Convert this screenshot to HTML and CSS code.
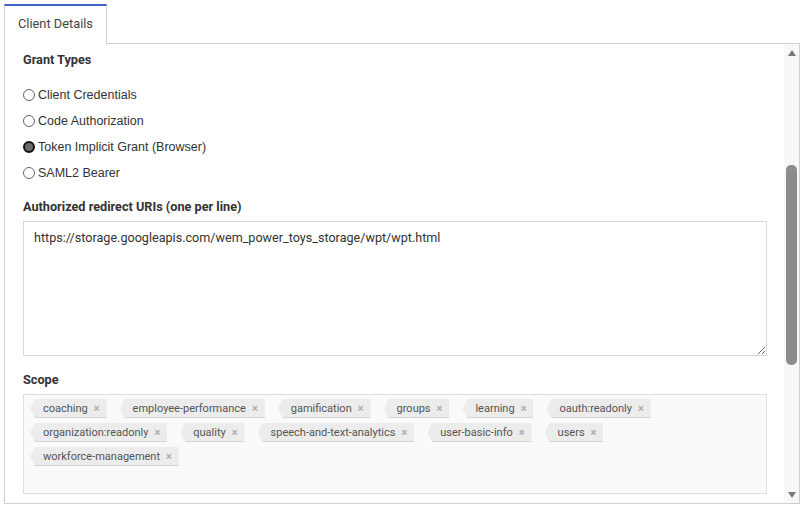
FILE: index.html
```html
<!DOCTYPE html>
<html>
<head>
<meta charset="utf-8">
<link rel="stylesheet" href="styles.css">
</head>
<body>
<div class="wrap">
  <div class="tabs">
    <div class="tab">Client Details</div>
  </div>
  <div class="panel">
    <div class="content">
      <div class="label first">Grant Types</div>
      <div class="radios">
        <label class="radio"><span class="dot"></span>Client Credentials</label>
        <label class="radio"><span class="dot"></span>Code Authorization</label>
        <label class="radio"><span class="dot checked"></span>Token Implicit Grant (Browser)</label>
        <label class="radio"><span class="dot"></span>SAML2 Bearer</label>
      </div>
      <div class="label uris">Authorized redirect URIs (one per line)</div>
      <textarea class="uri-box" readonly>https://storage.googleapis.com/wem_power_toys_storage/wpt/wpt.html</textarea>
      <div class="label scope">Scope</div>
      <div class="tag-box">
        <span class="tag">coaching<span class="x">×</span></span>
        <span class="tag">employee-performance<span class="x">×</span></span>
        <span class="tag">gamification<span class="x">×</span></span>
        <span class="tag">groups<span class="x">×</span></span>
        <span class="tag">learning<span class="x">×</span></span>
        <span class="tag">oauth:readonly<span class="x">×</span></span>
        <span class="tag">organization:readonly<span class="x">×</span></span>
        <span class="tag">quality<span class="x">×</span></span>
        <span class="tag">speech-and-text-analytics<span class="x">×</span></span>
        <span class="tag">user-basic-info<span class="x">×</span></span>
        <span class="tag">users<span class="x">×</span></span>
        <span class="tag">workforce-management<span class="x">×</span></span>
      </div>
    </div>
    <div class="scrollbar">
      <div class="arrow"><span class="tri up"></span></div>
      <div class="track"><div class="thumb"></div></div>
      <div class="arrow"><span class="tri down"></span></div>
    </div>
  </div>
</div>
</body>
</html>
```

FILE: styles.css
```css
html, body {
  margin: 0;
  padding: 0;
  background: #ffffff;
}
body {
  font-family: Roboto, "Liberation Sans", Arial, sans-serif;
  font-size: 13px;
  color: #333;
}
.wrap {
  margin: 4px 0 0 4px;
  width: 796px;
}
.tabs {
  display: flex;
}
.tab {
  position: relative;
  z-index: 1;
  width: 101px;
  height: 34px;
  padding-bottom: 4px;
  margin-bottom: -1px;
  border-top: 2px solid #3a68c0;
  border-left: 1px solid #cfcfcf;
  border-right: 1px solid #cfcfcf;
  background: #fff;
  color: #444;
  font-size: 12.8px;
  display: flex;
  align-items: center;
  justify-content: center;
  box-sizing: content-box;
}
.panel {
  display: flex;
  height: 459px;
  border: 1px solid #cfcfcf;
}
.content {
  flex: 1;
  padding: 8px 17px 0 18px;
  min-width: 0;
}
.label {
  font-weight: bold;
  font-size: 12.7px;
  line-height: 16px;
  color: #333;
}
.radios {
  margin-top: 14px;
  display: flex;
  flex-direction: column;
}
.radio {
  display: flex;
  align-items: center;
  height: 26px;
  color: #333;
  font-family: "Liberation Sans", Arial, sans-serif;
  font-size: 12.5px;
}
.dot {
  width: 10px;
  height: 10px;
  border: 1px solid #666;
  border-radius: 50%;
  background: #fff;
  margin-right: 3px;
  flex: none;
}
.dot.checked {
  width: 8px;
  height: 8px;
  border: 2px solid #111;
  background: #6a6a6a;
}
.uris {
  margin-top: 13px;
}
.uri-box {
  display: block;
  box-sizing: border-box;
  width: 744px;
  height: 135px;
  margin-top: 6px;
  padding: 8px 10px;
  border: 1px solid #d9d9d9;
  font-family: Roboto, "Liberation Sans", Arial, sans-serif;
  font-size: 12.6px;
  line-height: 16px;
  color: #333;
  resize: vertical;
  outline: none;
  background: #fff;
}
.scope {
  margin-top: 16px;
}
.tag-box {
  box-sizing: border-box;
  width: 744px;
  height: 100px;
  margin-top: 6px;
  padding: 4px 6px;
  border: 1px solid #dedede;
  background: #fafafa;
  display: flex;
  flex-wrap: wrap;
  align-content: flex-start;
  column-gap: 13px;
  row-gap: 5px;
}
.tag {
  box-sizing: border-box;
  display: inline-flex;
  align-items: center;
  height: 19px;
  padding: 0 7px 0 13px;
  background: #ececec;
  border-bottom: 1px solid #d4d4d4;
  color: #555;
  font-size: 11px;
  clip-path: polygon(5px 0, 100% 0, 100% 100%, 5px 100%, 0 50%);
}
.x {
  margin-left: 6px;
  color: #aaa;
  font-size: 11px;
  font-weight: bold;
}
.scrollbar {
  width: 15px;
  background: #f7f7f7;
  display: flex;
  flex-direction: column;
}
.arrow {
  height: 17px;
  display: flex;
  align-items: center;
  justify-content: center;
}
.tri {
  width: 0;
  height: 0;
  border-left: 4px solid transparent;
  border-right: 4px solid transparent;
}
.tri.up {
  border-bottom: 6px solid #7a7a7a;
}
.tri.down {
  border-top: 6px solid #7a7a7a;
}
.track {
  flex: 1;
  display: flex;
  justify-content: center;
}
.thumb {
  width: 11px;
  height: 200px;
  margin-top: 104px;
  border-radius: 5px;
  background: #8c8c8c;
}
```
